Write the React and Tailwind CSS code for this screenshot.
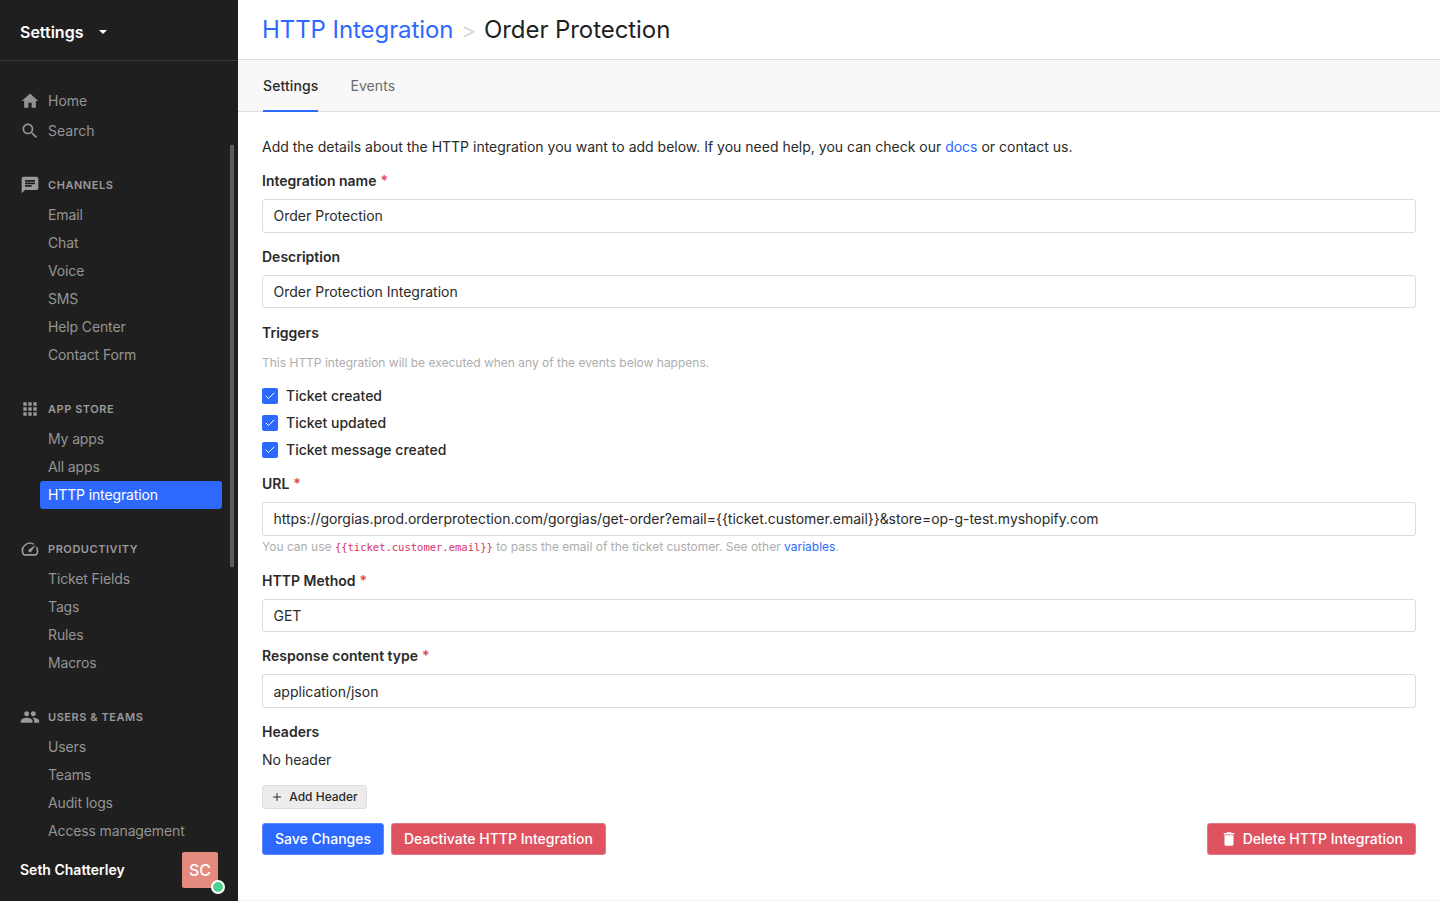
import { Plus, Check } from "lucide-react";

const channels = ["Email", "Chat", "Voice", "SMS", "Help Center", "Contact Form"];
const appStore = ["My apps", "All apps", "HTTP integration"];
const productivity = ["Ticket Fields", "Tags", "Rules", "Macros"];
const usersTeams = ["Users", "Teams", "Audit logs", "Access management"];
const triggers = ["Ticket created", "Ticket updated", "Ticket message created"];

const HomeIcon = () => (
  <svg viewBox="0 0 24 24" className="w-[20px] h-[20px]" fill="currentColor">
    <path d="M10 20v-6h4v6h5v-8h3L12 3 2 12h3v8z" />
  </svg>
);

const SearchIcon = () => (
  <svg viewBox="0 0 24 24" className="w-[20px] h-[20px]" fill="currentColor">
    <path d="M15.5 14h-.79l-.28-.27C15.41 12.59 16 11.11 16 9.5 16 5.91 13.09 3 9.5 3S3 5.91 3 9.5 5.91 16 9.5 16c1.61 0 3.09-.59 4.23-1.57l.27.28v.79l5 4.99L20.49 19l-4.99-5zm-6 0C7.01 14 5 11.99 5 9.5S7.01 5 9.5 5 14 7.01 14 9.5 11.99 14 9.5 14z" />
  </svg>
);

const ChatIcon = () => (
  <svg viewBox="0 0 24 24" className="w-[20px] h-[20px]" fill="currentColor">
    <path d="M20 2H4c-1.1 0-2 .9-2 2v18l4-4h14c1.1 0 2-.9 2-2V4c0-1.1-.9-2-2-2zM6 9h12v2H6V9zm8 5H6v-2h8v2zm4-6H6V6h12v2z" />
  </svg>
);

const AppsIcon = () => (
  <svg viewBox="0 0 24 24" className="w-[20px] h-[20px]" fill="currentColor">
    <path d="M4 8h4V4H4v4zm6 12h4v-4h-4v4zm-6 0h4v-4H4v4zm0-6h4v-4H4v4zm6 0h4v-4h-4v4zm6-10v4h4V4h-4zm-6 4h4V4h-4v4zm6 6h4v-4h-4v4zm0 6h4v-4h-4v4z" />
  </svg>
);

const SpeedIcon = () => (
  <svg viewBox="0 0 24 24" className="w-[20px] h-[20px]" fill="currentColor">
    <path d="M20.38 8.57l-1.23 1.85a8 8 0 0 1-.22 7.58H5.07A8 8 0 0 1 15.58 6.85l1.85-1.23A10 10 0 0 0 3.35 19a2 2 0 0 0 1.72 1h13.85a2 2 0 0 0 1.74-1 10 10 0 0 0-.27-10.44z" />
    <path d="M10.59 15.41a2 2 0 0 0 2.83 0l5.66-8.49-8.49 5.66a2 2 0 0 0 0 2.83z" />
  </svg>
);

const PeopleIcon = () => (
  <svg viewBox="0 0 24 24" className="w-[20px] h-[20px]" fill="currentColor">
    <path d="M16 11c1.66 0 2.99-1.34 2.99-3S17.66 5 16 5s-3 1.34-3 3 1.34 3 3 3zm-8 0c1.66 0 2.99-1.34 2.99-3S9.66 5 8 5 5 6.34 5 8s1.34 3 3 3zm0 2c-2.33 0-7 1.17-7 3.5V19h14v-2.5c0-2.33-4.67-3.5-7-3.5zm8 0c-.29 0-.62.02-.97.05 1.16.84 1.97 1.97 1.97 3.45V19h6v-2.5c0-2.33-4.67-3.5-7-3.5z" />
  </svg>
);

const TrashIcon = () => (
  <svg viewBox="0 0 24 24" className="w-[18px] h-[18px]" fill="currentColor">
    <path d="M6 19c0 1.1.9 2 2 2h8c1.1 0 2-.9 2-2V7H6v12zM19 4h-3.5l-1-1h-5l-1 1H5v2h14V4z" />
  </svg>
);

const Section = ({ icon, title, items, className }) => (
  <div className={className}>
    <div className="flex items-center h-[28px] pl-[20px] text-[#9a9a9a]">
      <span className="w-[28px] flex items-center">{icon}</span>
      <span className="text-[11px] font-semibold tracking-[0.55px]">{title}</span>
    </div>
    <div className="mt-[2px] tracking-[-0.13px]">
      {items.map((item) =>
        item === "HTTP integration" ? (
          <div
            key={item}
            className="ml-[40px] mr-[16px] h-[28px] pl-[8px] flex items-center rounded-[3px] bg-[#2e69ff] text-white text-sm"
          >
            {item}
          </div>
        ) : (
          <div key={item} className="h-[28px] pl-[48px] flex items-center text-sm text-[#949494]">
            {item}
          </div>
        )
      )}
    </div>
  </div>
);

const Sidebar = () => (
  <aside className="relative w-[238px] h-[901px] shrink-0 bg-[#1f1f1f] overflow-hidden flex flex-col">
    <div className="h-[61px] shrink-0 border-b border-[#3a3a3a] pl-[20px] flex items-center pt-[3px]">
      <span className="text-white font-semibold text-base">Settings</span>
      <span className="ml-[16px] w-0 h-0 border-x-[4px] border-x-transparent border-t-[4px] border-t-white" />
    </div>
    <div className="absolute left-[230px] top-[145px] w-[4px] h-[422px] bg-[#5c5c5c]" />
    <div className="pt-[25px]">
      <div className="h-[30px] pl-[20px] flex items-center gap-[8px] text-sm text-[#949494]">
        <HomeIcon />
        Home
      </div>
      <div className="h-[30px] pl-[20px] flex items-center gap-[8px] text-sm text-[#949494]">
        <SearchIcon />
        Search
      </div>
    </div>
    <Section className="mt-[25px]" icon={<ChatIcon />} title="CHANNELS" items={channels} />
    <Section className="mt-[26px]" icon={<AppsIcon />} title="APP STORE" items={appStore} />
    <Section className="mt-[26px]" icon={<SpeedIcon />} title="PRODUCTIVITY" items={productivity} />
    <Section className="mt-[26px]" icon={<PeopleIcon />} title="USERS & TEAMS" items={usersTeams} />
    <div className="mt-[7px] pl-[20px] pr-[20px] flex items-center justify-between">
      <span className="text-white text-sm font-semibold">Seth Chatterley</span>
      <div className="relative w-[36px] h-[36px] rounded-[2px] bg-[#e58a7e] text-white font-medium text-base flex items-center justify-center">
        SC
        <span className="absolute right-[-7px] bottom-[-6px] w-[14px] h-[14px] rounded-full bg-[#4fd08f] border-2 border-white" />
      </div>
    </div>
  </aside>
);

const Required = () => <span className="text-[#e5484d] ml-[4px]">*</span>;

const Label = ({ children, required }) => (
  <div className="h-[20px] flex items-center text-sm font-semibold text-[#2a2a2a]">
    <span>{children}</span>
    {required && <Required />}
  </div>
);

const TextField = ({ value, className }) => (
  <input
    readOnly
    value={value}
    className={`block w-full h-[33.6px] px-[10.5px] border border-[#dcdcdc] rounded-[3px] bg-white text-sm text-[#2a2a2a] outline-none ${className || ""}`}
  />
);

const Main = () => (
  <main className="flex-1 min-w-0 h-[901px] flex flex-col bg-white border-b border-[#f3f3fb]">
    <header className="h-[59px] shrink-0 pl-[24px] pt-[1px] flex items-center tracking-[-0.07px]">
      <h1 className="text-2xl text-[#2e69ff]">HTTP Integration</h1>
      <span className="text-[22px] text-[#d6d6d6] mx-[8px]">&gt;</span>
      <span className="text-2xl text-[#1f1f1f]">Order Protection</span>
    </header>
    <nav className="h-[53px] shrink-0 bg-[#f8f8f8] border-y border-[#dddddd] pl-[25px] flex gap-[32px] text-sm tracking-[0.1px]">
      <div className="flex items-center pt-[2px] border-b-2 border-[#2e69ff] text-[#2a2a2a] mb-[-1px] font-medium">Settings</div>
      <div className="flex items-center text-[#6b6b6b]">Events</div>
    </nav>
    <form className="px-[24px] pt-[25px]">
      <p className="h-[20px] flex items-center text-sm text-[#2a2a2a] whitespace-pre">
        Add the details about the HTTP integration you want to add below. If you need help, you can check our{" "}
        <a className="text-[#2e69ff]">docs</a> or contact us.
      </p>
      <div className="mt-[14px]">
        <Label required>Integration name</Label>
        <div className="mt-[8px]"><TextField value="Order Protection" /></div>
      </div>
      <div className="mt-[14px]">
        <Label>Description</Label>
        <div className="mt-[8px]"><TextField value="Order Protection Integration" /></div>
      </div>
      <div className="mt-[15px]">
        <Label>Triggers</Label>
        <p className="mt-[9.5px] h-[20px] flex items-center text-xs text-[#adadad]">
          This HTTP integration will be executed when any of the events below happens.
        </p>
        <div className="mt-[13px] flex flex-col gap-[7px]">
          {triggers.map((t) => (
            <label key={t} className="h-[20px] flex items-center gap-[8px] text-sm font-medium text-[#2a2a2a]">
              <span className="w-[16px] h-[16px] rounded-[2px] bg-[#2e69ff] flex items-center justify-center">
                <Check size={12} className="text-white" strokeWidth={2} />
              </span>
              {t}
            </label>
          ))}
        </div>
      </div>
      <div className="mt-[14.5px]">
        <Label required>URL</Label>
        <div className="mt-[8px]">
          <TextField
            className="tracking-[-0.03px]"
            value="https://gorgias.prod.orderprotection.com/gorgias/get-order?email={{ticket.customer.email}}&store=op-g-test.myshopify.com"
          />
        </div>
        <p className="mt-[3.5px] h-[16px] flex items-center text-xs text-[#adadad] whitespace-pre">
          You can use <code className="font-['DejaVu_Sans_Mono',monospace] text-[10.5px] text-[#d6336c]">{"{{ticket.customer.email}}"}</code> to pass the email of the ticket customer. See other <a className="text-[#2e69ff]">variables</a>.
        </p>
      </div>
      <div className="mt-[15.5px]">
        <Label required>HTTP Method</Label>
        <div className="mt-[8px]"><TextField value="GET" /></div>
      </div>
      <div className="mt-[14px]">
        <Label required>Response content type</Label>
        <div className="mt-[8px]"><TextField value="application/json" /></div>
      </div>
      <div className="mt-[14.5px]">
        <Label>Headers</Label>
        <p className="mt-[8px] h-[20px] flex items-center text-sm text-[#2a2a2a]">No header</p>
      </div>
      <button
        type="button"
        className="mt-[14.5px] h-[24px] w-[105px] flex items-center justify-center gap-[6px] rounded-[3px] border border-[#dedede] bg-[#ececec] text-xs font-medium text-[#2a2a2a]"
      >
        <Plus size={12} strokeWidth={2} />
        Add Header
      </button>
      <div className="mt-[14px] flex items-center">
        <button type="button" className="h-[32px] px-[12px] rounded-[3px] border border-[#5a87ff] bg-[#2e69ff] text-white text-sm font-medium">
          Save Changes
        </button>
        <button type="button" className="ml-[7px] h-[32px] px-[12px] rounded-[3px] border border-[#e27a85] bg-[#df5361] text-white text-sm font-medium">
          Deactivate HTTP Integration
        </button>
        <button type="button" className="ml-auto h-[32px] px-[12px] rounded-[3px] border border-[#e27a85] bg-[#df5361] text-white text-sm font-medium flex items-center gap-[5px]">
          <TrashIcon />
          Delete HTTP Integration
        </button>
      </div>
    </form>
  </main>
);

export default function App() {
  return (
    <div className="flex w-[1440px] h-[901px] overflow-hidden font-['Inter',sans-serif]">
      <Sidebar />
      <Main />
    </div>
  );
}
